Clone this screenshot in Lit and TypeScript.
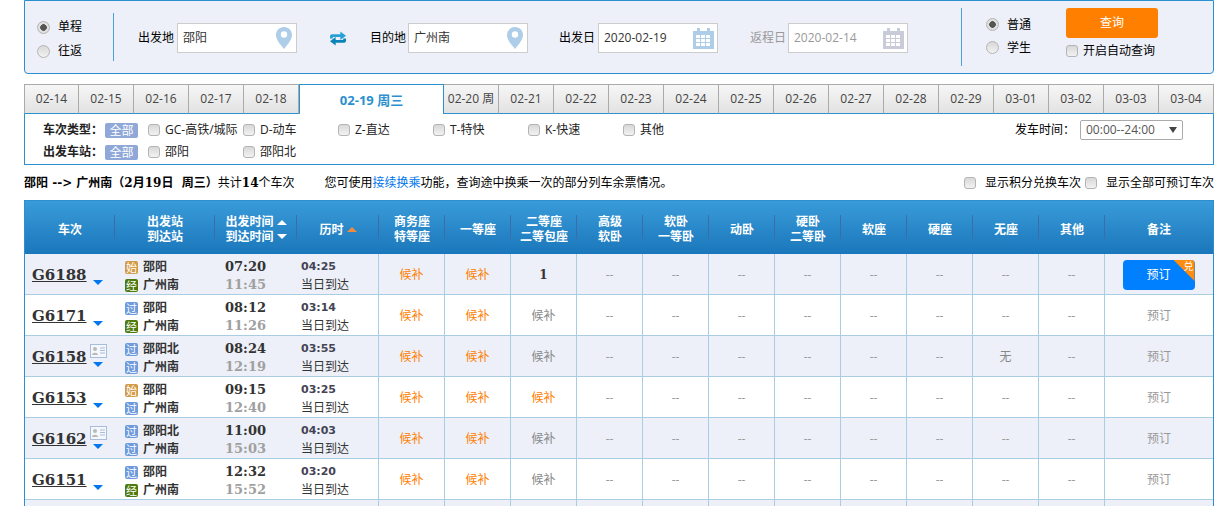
import { LitElement, html, css, svg } from "lit";
import { customElement } from "lit/decorators.js";

const pin = html`<svg class="ico" width="18" height="24" viewBox="0 0 18 24"><path d="M9 1C4.4 1 1 4.6 1 9c0 5 5 10 8 14 3-4 8-9 8-14 0-4.4-3.4-8-8-8z" fill="#aecde8"/><circle cx="9" cy="8.5" r="3.2" fill="#fff"/></svg>`;
const cal = (c: string) => html`<svg class="ico cal" width="21" height="21" viewBox="0 0 21 21"><path d="M0 3h4V0h3v3h7V0h3v3h4v18H0z" fill="${c}"/>${[7, 11, 15].map(y => [3, 8, 13].map(x => svg`<rect x="${x}" y="${y}" width="4" height="3" fill="#fff"/>`))}</svg>`;
const swap = html`<svg width="17" height="15" viewBox="0 0 17 15"><path d="M0 7.5V5q0-2 2-2h9V0l6 4.5-6 4.5V6H3v1.5z" fill="#27a0d8"/><path d="M17 7.5V10q0 2-2 2H6v3L0 10.5 6 6v3h8V7.5z" fill="#0a84b8"/></svg>`;
const idCard = html`<svg class="idcard" width="17" height="14" viewBox="0 0 17 14"><rect x=".5" y=".5" width="16" height="13" fill="#f4f7fc" stroke="#a9bcdc"/><circle cx="5" cy="5" r="2" fill="#b9b9b9"/><path d="M2 11c0-3 6-3 6 0z" fill="#b9b9b9"/><path d="M10 4h5M10 6.5h5M10 9h5" stroke="#a9bcdc"/></svg>`;

type Row = [string, string, string, string, string, string, string, string, string, boolean, string, boolean];
const rows: Row[] = [
  ["G6188", "始", "邵阳", "经", "07:20", "11:45", "04:25", "o", "1", false, "--", true],
  ["G6171", "过", "邵阳", "经", "08:12", "11:26", "03:14", "o", "g", false, "--", false],
  ["G6158", "过", "邵阳北", "过", "08:24", "12:19", "03:55", "o", "g", true, "无", false],
  ["G6153", "始", "邵阳", "过", "09:15", "12:40", "03:25", "o", "o", false, "--", false],
  ["G6162", "过", "邵阳北", "过", "11:00", "15:03", "04:03", "o", "g", true, "--", false],
  ["G6151", "过", "邵阳", "经", "12:32", "15:52", "03:20", "o", "g", false, "--", false],
];
const heads: string[][] = [["商务座", "特等座"], ["一等座"], ["二等座", "二等包座"], ["高级", "软卧"], ["软卧", "一等卧"], ["动卧"], ["硬卧", "二等卧"], ["软座"], ["硬座"], ["无座"], ["其他"]];
const dates = ["02-14", "02-15", "02-16", "02-17", "02-18", "*", "02-20 周", "02-21", "02-22", "02-23", "02-24", "02-25", "02-26", "02-27", "02-28", "02-29", "03-01", "03-02", "03-03", "03-04"];

@customElement("app-root")
export class AppRoot extends LitElement {
  static styles = css`
    :host { display: block; width: 1220px; height: 506px; overflow: hidden; background: #fff; color: #333; font: 12px/16px "Open Sans", "Noto Sans CJK SC", sans-serif; }
    * { box-sizing: border-box; }
    .wrap { margin-left: 24px; width: 1190px; }
    .panel { height: 74px; border: 1px solid #2b8fd0; border-radius: 0 0 4px 4px; background: #edf0f8; display: flex; align-items: center; color: #000; }
    .radio, .check { display: inline-block; flex: none; background: linear-gradient(#d8d8d8, #f2f2f2); border: 1px solid #b4b4b4; }
    .radio { width: 13px; height: 13px; border-radius: 50%; position: relative; }
    .radio.on { background: radial-gradient(circle, #555 0 3px, #e0e0e0 3.6px); }
    .check { width: 12px; height: 12px; border-radius: 3px; }
    .opt { display: flex; align-items: center; gap: 8px; height: 24px; }
    .trip { width: 88px; padding-left: 12px; margin-top: 4px; }
    .vline { width: 1px; background: #4ba3d8; flex: none; }
    .v1 { height: 48px; }
    .v2 { height: 58px; margin-left: 53px; }
    .field { display: flex; align-items: center; margin-top: 2px; }
    .f1 { margin-left: 24px; }
    .f2 { margin-left: 24px; }
    .f3 { margin-left: 31px; }
    .f4 { margin-left: 32px; color: #999; }
    .lab { width: 39px; white-space: nowrap; }
    .lab.s { width: 38px; }
    .input { width: 120px; height: 30px; border: 1px solid #ccc; background: #fff; display: flex; align-items: center; justify-content: space-between; padding: 0 3px 0 5px; color: #333; }
    .f4 .input { color: #999; }
    .ico { flex: none; }
    .swap { margin-left: 33px; width: 16px; margin-top: 2px; display: flex; }
    .kind { width: 80px; margin-left: 24px; margin-top: -2px; }
    .kind .opt { height: 23px; }
    .act { display: flex; flex-direction: column; align-self: flex-start; margin-top: 7px; }
    .query { width: 92px; height: 30px; background: #ff8000; border-radius: 3px; color: #fff; display: flex; align-items: center; justify-content: center; margin-bottom: 3px; }
    .auto { display: flex; align-items: center; gap: 5px; height: 20px; }
    .gap { height: 10px; }
    .tabs { display: flex; height: 30px; position: relative; z-index: 1; }
    .tab { width: 55px; border: 1px solid #aaa; border-left: 0; background: linear-gradient(#f6f6f6, #e2e2e2); color: #444; display: flex; align-items: center; justify-content: center; white-space: nowrap; border-bottom: 1px solid #2b8fd0; }
    .tab:first-child { border-left: 1px solid #aaa; }
    .tab.sel { width: 145px; background: #fff; border: 1px solid #2b8fd0; border-bottom: 0; color: #2b8fd0; font-weight: 700; font-size: 13px; }
    .filter { height: 52px; margin-top: -1px; border: 1px solid #2b8fd0; padding: 8px 0 0 18px; color: #222; }
    .frow { display: flex; align-items: center; height: 16px; margin-bottom: 6px; }
    .flab { width: 62px; font-weight: 700; color: #222; white-space: nowrap; }
    .chip { width: 33px; height: 15px; background: #8fa8d8; color: #fff; text-align: center; line-height: 15px; border-radius: 2px; margin-right: 10px; }
    .fit { width: 95px; display: flex; align-items: center; gap: 5px; white-space: nowrap; }
    .time { margin-left: auto; margin-right: 30px; display: flex; align-items: center; gap: 5px; color: #000; }
    .select { width: 103px; height: 20px; border: 1px solid #aaa; border-radius: 2px; padding: 0 5px; display: flex; align-items: center; justify-content: space-between; color: #555; background: #fff; }
    .caret { width: 0; height: 0; border: 4px solid transparent; border-top: 6px solid #444; border-bottom: 0; }
    .info { height: 35px; display: flex; align-items: center; padding-top: 1px; color: #000; white-space: pre; }
    b { font-weight: 700; }
    .info b { font-family: "DejaVu Serif", "Noto Sans CJK SC", serif; }
    .tip { margin-left: 30px; }
    .link { color: #0077ee; }
    .opts { margin-left: auto; display: flex; align-items: center; }
    .opts .check { margin-right: 9px; }
    .opts span + .check { margin-left: 4px; }
    .table { border-left: 1px solid #2b8fd0; border-right: 1px solid #2b8fd0; }
    .grid { display: grid; grid-template-columns: 90px 100px 82px 82px repeat(11, 66px) 108px; }
    .head { height: 54px; background: linear-gradient(#399bd9, #1b77bb); border-top: 1px solid #2b8fd0; color: #fff; font-weight: 700; line-height: 15px; }
    .hc { display: flex; align-items: center; justify-content: center; position: relative; text-align: center; padding-top: 3px; }
    .hc::after { content: ""; position: absolute; right: 0; top: 14px; height: 24px; width: 1px; background: #3f6ca8; }
    .hc:last-child::after { display: none; }
    .sort { display: flex; flex-direction: column; gap: 9px; margin-left: 3px; }
    .up { width: 0; height: 0; border: 5px solid transparent; border-bottom: 5px solid #fff; border-top: 0; }
    .dn { width: 0; height: 0; border: 5px solid transparent; border-top: 5px solid #fff; border-bottom: 0; }
    .up.org { border-bottom-color: #f08a3c; }
    .row { height: 41px; border-bottom: 1px solid #a9cde3; }
    .row.odd { background: #edf0f8; }
    .c { border-right: 1px solid #a9cde3; display: flex; align-items: center; justify-content: center; padding-top: 2px; min-width: 0; }
    .c:last-child { border-right: 0; }
    .o { color: #ff8000; }
    .g { color: #888; }
    .d { color: #999; }
    .n { font-weight: 700; font-family: "DejaVu Serif", serif; color: #333; }
    .train { justify-content: flex-start; padding-left: 7px; border-right: 0; }
    .tno { font: 700 15px/18px "DejaVu Serif", serif; text-decoration: underline; color: #333; }
    .tail { width: 17px; margin-left: 3px; height: 40px; margin-top: -2px; display: flex; flex-direction: column; align-items: center; padding-top: 8px; }
    .idslot { height: 14px; flex: none; }
    .idcard { display: block; }
    .arrow { width: 0; height: 0; border: 5px solid transparent; border-top: 5px solid #0077ee; border-bottom: 0; margin-top: 4px; }
    .station { justify-content: flex-start; padding-left: 10px; flex-direction: column; align-items: flex-start; padding-top: 4px; border-right: 0; }
    .sl { display: flex; align-items: center; gap: 5px; height: 18px; color: #333; white-space: nowrap; font-weight: 700; }
    .badge { width: 13px; height: 13px; border-radius: 2px; color: #fff; font-size: 11px; font-weight: 400; line-height: 13px; text-align: center; flex: none; }
    .b始 { background: #d29a46; }
    .b经 { background: #4d7a0e; }
    .b过 { background: #6e9bdc; }
    .tm { flex-direction: column; align-items: flex-start; justify-content: center; padding-left: 10px; padding-top: 4px; border-right: 0; font: 700 13px/18px "DejaVu Serif", serif; }
    .tm i { font-style: normal; color: #333; }
    .tm i + i { color: #a0a0a0; }
    .dur { flex-direction: column; align-items: flex-start; padding-left: 4px; padding-top: 4px; line-height: 18px; color: #333; }
    .dur b { font: 700 11px/18px "DejaVu Sans", sans-serif; color: #445; }
    .book { width: 72px; height: 30px; background: #0080ff; color: #fff; border-radius: 4px; position: relative; overflow: hidden; display: flex; align-items: center; justify-content: center; margin-right: 1px; }
    .corner { position: absolute; right: 0; top: 0; width: 21px; height: 21px; background: #ff8c10; clip-path: polygon(0 0, 100% 0, 100% 100%); }
    .dui { position: absolute; right: 1px; top: 1px; font-size: 10px; line-height: 11px; color: #fff; }
    .next { height: 8px; background: #edf0f8; }
    .next .c { height: 8px; }
    .next .nb { border-right: 0; }
  `;

  private seat(v: string) {
    if (v === "o") return html`<div class="c o">候补</div>`;
    if (v === "g") return html`<div class="c g">候补</div>`;
    if (v === "--") return html`<div class="c d">--</div>`;
    if (v === "无") return html`<div class="c g">无</div>`;
    return html`<div class="c n">${v}</div>`;
  }

  render() {
    const types = ["GC-高铁/城际", "D-动车", "Z-直达", "T-特快", "K-快速", "其他"];
    return html`
      <div class="wrap">
        <div class="panel">
          <div class="trip">
            <div class="opt"><span class="radio on"></span>单程</div>
            <div class="opt"><span class="radio"></span>往返</div>
          </div>
          <div class="vline v1"></div>
          <div class="field f1"><span class="lab">出发地</span><div class="input"><span>邵阳</span>${pin}</div></div>
          <div class="swap">${swap}</div>
          <div class="field f2"><span class="lab s">目的地</span><div class="input"><span>广州南</span>${pin}</div></div>
          <div class="field f3"><span class="lab">出发日</span><div class="input"><span>2020-02-19</span>${cal("#aecde8")}</div></div>
          <div class="field f4"><span class="lab s">返程日</span><div class="input"><span>2020-02-14</span>${cal("#c8ccd8")}</div></div>
          <div class="vline v2"></div>
          <div class="kind">
            <div class="opt"><span class="radio on"></span>普通</div>
            <div class="opt"><span class="radio"></span>学生</div>
          </div>
          <div class="act">
            <div class="query">查询</div>
            <div class="auto"><span class="check"></span>开启自动查询</div>
          </div>
        </div>
        <div class="gap"></div>
        <div class="tabs">
          ${dates.map(d => d === "*" ? html`<div class="tab sel">02-19 周三</div>` : html`<div class="tab">${d}</div>`)}
        </div>
        <div class="filter">
          <div class="frow">
            <span class="flab">车次类型：</span><span class="chip">全部</span>
            ${types.map(t => html`<span class="fit"><span class="check"></span>${t}</span>`)}
            <div class="time">发车时间：<div class="select"><span>00:00--24:00</span><span class="caret"></span></div></div>
          </div>
          <div class="frow">
            <span class="flab">出发车站：</span><span class="chip">全部</span>
            <span class="fit"><span class="check"></span>邵阳</span>
            <span class="fit"><span class="check"></span>邵阳北</span>
          </div>
        </div>
        <div class="info">
          <b>邵阳 --> 广州南（2月19日  周三）</b><span>共计</span><b>14</b><span>个车次</span>
          <span class="tip">您可使用<span class="link">接续换乘</span>功能，查询途中换乘一次的部分列车余票情况。</span>
          <div class="opts">
            <span class="check"></span><span>显示积分兑换车次</span>
            <span class="check"></span><span>显示全部可预订车次</span>
          </div>
        </div>
        <div class="table">
          <div class="grid head">
            <div class="hc">车次</div>
            <div class="hc">出发站<br />到达站</div>
            <div class="hc"><span>出发时间<br />到达时间</span><span class="sort"><span class="up"></span><span class="dn"></span></span></div>
            <div class="hc">历时<span class="sort"><span class="up org"></span></span></div>
            ${heads.map(h => html`<div class="hc"><span>${h[0]}${h[1] ? html`<br />${h[1]}` : ""}</span></div>`)}
            <div class="hc">备注</div>
          </div>
          ${rows.map((r, i) => html`
            <div class="grid row ${i % 2 === 0 ? "odd" : ""}">
              <div class="c train"><span class="tno">${r[0]}</span>
                <div class="tail"><div class="idslot">${r[9] ? idCard : ""}</div><span class="arrow"></span></div>
              </div>
              <div class="c station">
                <div class="sl"><span class="badge b${r[1]}">${r[1]}</span>${r[2]}</div>
                <div class="sl"><span class="badge b${r[3]}">${r[3]}</span>广州南</div>
              </div>
              <div class="c tm"><i>${r[4]}</i><i>${r[5]}</i></div>
              <div class="c dur"><b>${r[6]}</b><span>当日到达</span></div>
              ${this.seat(r[7])}${this.seat(r[7])}${this.seat(r[8])}
              ${["--", "--", "--", "--", "--", "--"].map(v => this.seat(v))}
              ${this.seat(r[10])}${this.seat("--")}
              <div class="c">${r[11] ? html`<div class="book">预订<span class="corner"></span><span class="dui">兑</span></div>` : html`<span class="d">预订</span>`}</div>
            </div>`)}
          <div class="grid next">
            ${Array.from({ length: 16 }, (_, i) => html`<div class="c ${i < 3 ? "nb" : ""}"></div>`)}
          </div>
        </div>
      </div>
    `;
  }
}
